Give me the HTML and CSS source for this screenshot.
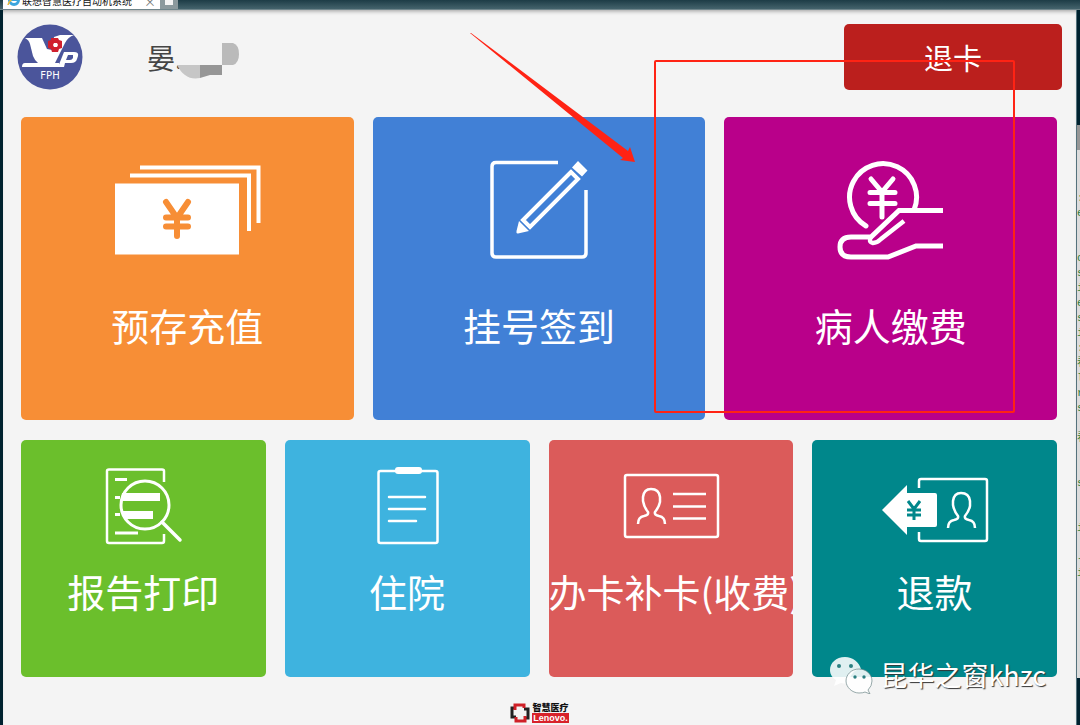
FILE: index.html
```
<!DOCTYPE html>
<html lang="zh-CN">
<head>
  <meta charset="UTF-8">
  <title>联想智慧医疗自动机系统</title>
  <meta name="viewport" content="width=device-width, initial-scale=1.0">
  <link rel="stylesheet" href="styles.css">
</head>
<body>
  <!-- 浏览器标签栏 -->
  <div class="tab-bar">
    <div class="tab">
      <svg class="tab-icon" viewBox="0 0 14 14">
        <circle cx="7" cy="6" r="4.5" fill="none" stroke="#3aa5dd" stroke-width="3"/>
        <path d="M3 6H11" stroke="#3aa5dd" stroke-width="2"/>
        <path d="M1 11Q2 5 13 1" fill="none" stroke="#e8b93c" stroke-width="1.5"/>
      </svg>
      <span class="tab-title">联想智慧医疗自动机系统</span>
      <button class="tab-close" aria-label="关闭">×</button>
    </div>
    <button class="tab-new" aria-label="新标签页"><span></span></button>
  </div>

  <div class="desktop">
    <div class="screen">
      <header class="header">
        <svg class="logo" viewBox="0 0 66 66">
          <circle cx="33" cy="33" r="32.5" fill="#4b559b"/>
          <path d="M8 14H25L30 25L35 26L37 13L43 11H57Q51 13 48 19L38 39H42V43H5Q5 39 8 39H21Q18 37 16 32L13 20Q12 16 8 14Z" fill="#fff"/>
          <path d="M47 28H57Q62 28 61 32L60 35Q59 39 54 39H48L47 43H41ZM51 31L49 36H53Q55 36 56 34V31Z" fill="#fff" fill-rule="evenodd"/>
          <path d="M34 14H41L42 16L45 17V24L42 25L41 28H35L34 25L31 24V17L34 16Z" fill="#d0202e"/>
          <path d="M37 19H40L41 21L40 23H37L36 21Z" fill="#fff"/>
          <text x="33" y="55" class="logo-text">FPH</text>
        </svg>
        <div class="patient">
          <span>晏.</span>
          <svg class="mask" viewBox="0 0 62 38">
            <path d="M45 1H56Q62 3 62 12Q62 21 56 23H45Z" fill="#bababa"/>
            <path d="M0 23H23V36Q8 39 0 23Z" fill="#c6c6c6"/>
            <path d="M23 23H45V33H33L23 36Z" fill="#969696"/>
          </svg>
        </div>
        <button class="btn-exit">退卡</button>
      </header>

      <main class="menu">
        <div class="row row-large">
          <button class="tile orange">
            <svg class="icon" viewBox="0 0 148 100">
              <path d="M27 7.5H145.5V63M17 15.5H136V71" fill="none" stroke="#fff" stroke-width="4"/>
              <rect x="2" y="23.5" width="124" height="71" fill="#fff"/>
              <path d="M53 42L64 58L75 42M64 58V76M53 57.5H75M53 66.5H75" fill="none" stroke="#f78e36" stroke-width="6" stroke-linecap="round"/>
            </svg>
            <span class="label">预存充值</span>
          </button>
          <button class="tile blue">
            <svg class="icon" viewBox="0 0 148 100">
              <g fill="none" stroke="#fff" stroke-width="3.5">
                <path d="M93 2.5H31Q27 2.5 27 6.5V93Q27 97 31 97H117Q121 97 121 93V30"/>
                <path d="M106 12L58 60L65 67L113 19Z" stroke-width="4"/>
              </g>
              <path d="M113 1L122.5 10.5L117 16.5L107 7.5ZM54 61L64 71L53 73.5Q51 74 51.5 71Z" fill="#fff"/>
            </svg>
            <span class="label">挂号签到</span>
          </button>
          <button class="tile purple">
            <svg class="icon" viewBox="0 0 148 100">
              <g fill="none" stroke="#fff" stroke-width="5">
                <path d="M49 66A33.5 33.5 0 1 1 97 50" stroke-linecap="round"/>
                <path d="M54 19L65 32L76 19M65 32V57M53 32.5H78M53 43.5H78" stroke-linecap="round"/>
                <path d="M126 50.5H82L54 77H34Q23 77 23 87Q23 97 34 97H71L99 86H126"/>
                <path d="M54 76Q51 82 56 83Q60 83 64 79L87 61" stroke-width="4.5"/>
              </g>
            </svg>
            <span class="label">病人缴费</span>
          </button>
        </div>

        <div class="row row-small">
          <button class="tile green">
            <svg class="icon" viewBox="0 0 110 80">
              <path d="M76 16V5Q76 3.5 74 3.5H21Q19 3.5 19 5V75Q19 77 21 77H74Q76 77 76 75V68" fill="none" stroke="#fff" stroke-width="2.5"/>
              <path d="M27 12H39V15H27ZM27 30H32V33H27ZM27 47H32V50H27ZM27 65.5H50V68.5H27ZM34 27H72V35H33ZM33 45H65V53H38Z" fill="#fff"/>
              <circle cx="57" cy="39" r="24" fill="none" stroke="#fff" stroke-width="3"/>
              <path d="M74 56L92 74" stroke="#fff" stroke-width="3.5" stroke-linecap="round"/>
            </svg>
            <span class="label">报告打印</span>
          </button>
          <button class="tile sky">
            <svg class="icon" viewBox="0 0 110 80">
              <rect x="26.5" y="5" width="59" height="72" rx="2" fill="none" stroke="#fff" stroke-width="2.5"/>
              <rect x="43" y="1" width="27" height="7" rx="3" fill="#fff"/>
              <path d="M37 31H73M37 43H73M37 55H64" stroke="#fff" stroke-width="2.5" stroke-linecap="round"/>
            </svg>
            <span class="label">住院</span>
          </button>
          <button class="tile red">
            <svg class="icon" viewBox="0 0 110 80">
              <g fill="none" stroke="#fff" stroke-width="2.5">
                <rect x="9" y="9" width="93" height="62" rx="2"/>
                <path d="M57 28H90M57 40.5H90M57 52.5H90"/>
                <path id="person" d="M22 58Q22 51 28 50Q33 49 32 46Q28 41 27 35V31Q28 23 35 23Q43 23 44 31V36Q43 41 39 46Q38 49 43 50Q49 51 49 58"/>
              </g>
            </svg>
            <span class="label">办卡补卡(收费)</span>
          </button>
          <button class="tile teal">
            <svg class="icon" viewBox="0 0 110 80">
              <g fill="none" stroke="#fff" stroke-width="2.5">
                <path d="M39 22V15Q39 13 41 13H105Q107 13 107 15V73Q107 75 105 75H41Q39 75 39 73V66"/>
                <use href="#person" x="46" y="4"/>
              </g>
              <path d="M2 44L27 19V27H55Q57 27 57 29V59Q57 61 55 61H27V69Z" fill="#fff"/>
              <path d="M28 35L34 43L40 35M34 43V54M27 44H41M27 49H41" fill="none" stroke="#00878b" stroke-width="3"/>
            </svg>
            <span class="label">退款</span>
          </button>
        </div>
      </main>

      <footer class="footer">
        <svg class="footer-logo" viewBox="0 0 20 20">
          <path d="M5 5H2V14H6" fill="none" stroke="#222" stroke-width="3"/>
          <path d="M14 6H18V15H15" fill="none" stroke="#222" stroke-width="3"/>
          <path d="M5 7V2H14V5M6 14V18H15V13" fill="none" stroke="#cf2027" stroke-width="3"/>
        </svg>
        <div class="brand">
          <span class="brand-cn">智慧医疗</span>
          <span class="brand-en">Lenovo.</span>
        </div>
      </footer>
    </div>

    <!-- 后面露出的窗口 -->
    <div class="behind">
      <div class="behind-title"></div>
<pre class="behind-code">:
e


o
s
i
e
s
i
:
看
l
r
s

看


s


i

-
i</pre>
    </div>
  </div>

  <!-- 标注 -->
  <svg class="arrow" viewBox="0 0 166 130">
    <path d="M0 0L1 0L158 118L160 114L165 129L150 127L153 125Z" fill="#ff2314"/>
  </svg>
  <div class="mark-box"></div>

  <!-- 水印 -->
  <div class="watermark">
    <svg class="wechat" viewBox="0 0 44 38">
      <path d="M16 1C7 1 1 7 1 14C1 19 4 22 7 24L5 30L12 27Q17 28 20 27C21 17 27 13 32 13C30 6 24 1 16 1Z" fill="#fff" fill-opacity="0.88"/>
      <path d="M30 13C22 13 17 19 17 25C17 31 23 37 30 37Q34 37 36 36L41 38L39 34Q43 30 43 25C43 18 37 13 30 13Z" fill="#fff" fill-opacity="0.88" stroke="#6b8586" stroke-width="0.7"/>
      <g fill="#2b7f81">
        <circle cx="10" cy="10" r="2"/>
        <circle cx="22" cy="10" r="2"/>
        <circle cx="26" cy="21" r="1.7"/>
        <circle cx="35" cy="21" r="1.7"/>
      </g>
    </svg>
    <span>昆华之窗khzc</span>
  </div>
</body>
</html>
```

FILE: styles.css
```
* {
  box-sizing: border-box;
}
body {
  margin: 0;
  min-height: 100vh;
  display: flex;
  flex-direction: column;
  position: relative;
  overflow: hidden;
  background: #00222f;
  font-family: "Noto Sans CJK SC", "Noto Sans", sans-serif;
}
button {
  border: none;
  padding: 0;
  font-family: inherit;
  cursor: pointer;
}

/* 标签栏 */
.tab-bar {
  display: flex;
  height: 10px;
  padding-left: 3px;
  overflow: hidden;
  background: linear-gradient(#1d3c46, #44636c);
  border-bottom: 1px solid #6f858b;
}
.tab {
  display: flex;
  align-items: center;
  width: 157px;
  height: 20px;
  margin-top: -9px;
  padding: 0 4px;
  background: #fff;
}
.tab-icon {
  width: 14px;
  height: 14px;
  margin-right: 1px;
}
.tab-title {
  flex: 1;
  font-size: 10px;
  line-height: 20px;
  white-space: nowrap;
  color: #111;
}
.tab-close {
  background: none;
  font-size: 12px;
  color: #777;
}
.tab-new {
  width: 18px;
  background: #8b999d;
}
.tab-new span {
  display: block;
  width: 8px;
  height: 5px;
  margin: 0 auto 4px;
  background: #f4f4f4;
}

.desktop {
  flex: 1;
  display: flex;
}
.screen {
  flex: 1;
  min-width: 0;
  margin-left: 3px;
  background: #f4f4f4;
  box-shadow: inset 0 4px 4px -3px #999;
}

/* 顶部 */
.header {
  display: flex;
  align-items: center;
  padding: 14px 14px 27px;
}
.logo {
  width: 66px;
  height: 66px;
}
.logo-text {
  font-family: "DejaVu Sans", sans-serif;
  font-size: 10px;
  text-anchor: middle;
  fill: #fff;
}
.patient {
  display: flex;
  align-items: center;
  flex: 1;
  margin-left: 64px;
  font-size: 28px;
  line-height: 40px;
  color: #444;
}
.mask {
  width: 62px;
  height: 38px;
  margin: 8px 0 0 -6px;
}
.btn-exit {
  width: 218px;
  height: 66px;
  border-radius: 5px;
  background: #bb1f1d;
  color: #fff;
  font-size: 29px;
}

/* 功能菜单 */
.menu {
  display: flex;
  flex-direction: column;
  gap: 20px;
  padding: 0 19px 0 18px;
}
.row {
  display: grid;
  gap: 19px;
}
.row-large {
  grid-template-columns: repeat(3, minmax(0, 1fr));
}
.row-small {
  grid-template-columns: repeat(4, minmax(0, 1fr));
}
.tile {
  display: flex;
  flex-direction: column;
  align-items: center;
  overflow: hidden;
  border-radius: 5px;
  color: #fff;
}
.row-large .tile {
  gap: 37px;
  padding: 43px 0 67px;
}
.row-small .tile {
  gap: 17px;
  padding: 26px 0 58px;
}
.row-large .icon {
  width: 148px;
  height: 100px;
}
.row-small .icon {
  width: 110px;
  height: 80px;
}
.label {
  max-width: 100%;
  font-size: 38px;
  line-height: 56px;
  white-space: nowrap;
}
.orange { background: #f78e36; }
.blue { background: #4180d6; }
.purple { background: #b9008a; }
.green { background: #6bbf2c; }
.sky { background: #3eb3df; }
.red { background: #db5b5a; }
.teal { background: #00878b; }

/* 底部 */
.footer {
  display: flex;
  justify-content: center;
  align-items: center;
  gap: 2px;
  padding-top: 26px;
}
.footer-logo {
  width: 20px;
  height: 20px;
}
.brand {
  display: flex;
  flex-direction: column;
}
.brand-cn {
  font-size: 9px;
  font-weight: 900;
  line-height: 10px;
  color: #111;
}
.brand-en {
  background: #d8222a;
  color: #fff;
  font-family: "Liberation Sans", sans-serif;
  font-size: 9px;
  font-weight: bold;
  line-height: 10px;
  text-align: center;
}

/* 后面的窗口 */
.behind {
  width: 4px;
  overflow: hidden;
  border-left: 1px solid #54727c;
  padding-top: 115px;
}
.behind-title {
  height: 25px;
  background: #969696;
}
.behind-code {
  height: 528px;
  margin: 0;
  padding-top: 41px;
  background: #dcdcdc;
  font-family: "Liberation Mono", "Noto Sans CJK SC", monospace;
  font-size: 11px;
  line-height: 15px;
  color: #2f7d3a;
}

/* 标注与水印浮在页面上方 */
.arrow {
  position: absolute;
  left: 470px;
  top: 33px;
  width: 166px;
  height: 130px;
}
.mark-box {
  position: absolute;
  left: 654px;
  top: 60px;
  width: 361px;
  height: 353px;
  border: 2px solid #ff2314;
  border-radius: 2px;
  pointer-events: none;
}
.watermark {
  position: absolute;
  right: 34px;
  top: 655px;
  display: flex;
  align-items: center;
  gap: 7px;
  color: #fff;
  font-size: 27px;
  line-height: 40px;
  text-shadow: 1px 1px 1px #333;
}
.wechat {
  width: 44px;
  height: 38px;
}
```
